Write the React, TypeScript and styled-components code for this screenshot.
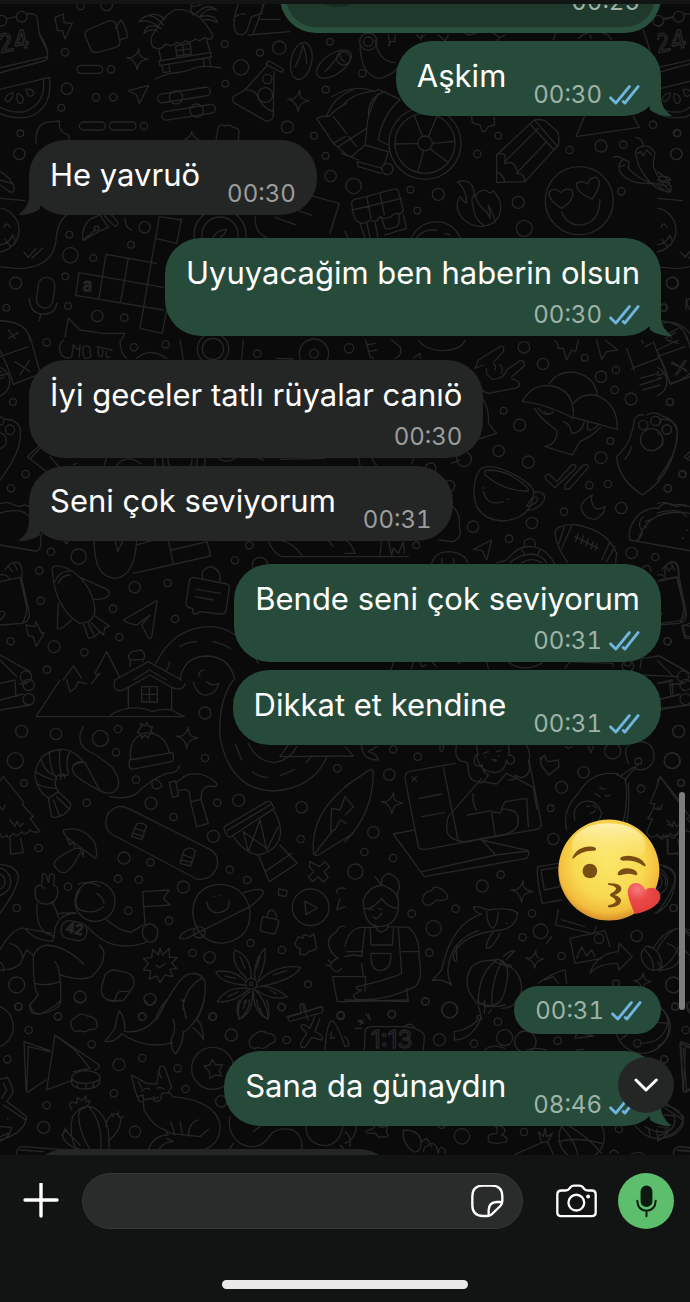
import React from "react";
import styled, { createGlobalStyle } from "styled-components";

const GlobalStyle = createGlobalStyle`
  * { box-sizing: border-box; }
  body { margin: 0; background: #0a0a0a; }
  button { font: inherit; }
`;

const Screen = styled.div`
  display: flex;
  flex-direction: column;
  height: 100vh;
  background: #0a0a0a;
  color: #fff;
  font-family: Inter, "Liberation Sans", sans-serif;
`;

const HeaderEdge = styled.header`
  flex: none;
  height: 4px;
  background: #131414;
`;

const Chat = styled.main`
  position: relative;
  flex: 1;
  min-height: 0;
  overflow: hidden;
  display: flex;
  flex-direction: column;
  justify-content: flex-end;
`;

const Wallpaper = styled.svg`
  position: absolute;
  left: 0;
  top: -4px;
  width: 690px;
  height: 1302px;
  fill: none;
  stroke: #252626;
  stroke-width: 4px;
  stroke-linecap: round;
  stroke-linejoin: round;
`;

const Thread = styled.ol`
  position: relative;
  flex: none;
  display: flex;
  flex-direction: column;
  list-style: none;
  margin: 0 0 -69px;
  padding: 0 29px;
`;

const Message = styled.li<{ $out?: boolean; $gap: number }>`
  display: flex;
  flex-direction: column;
  align-items: ${(p) => (p.$out ? "flex-end" : "flex-start")};
  margin-top: ${(p) => p.$gap}px;
`;

const Bubble = styled.div<{ $out?: boolean; $stacked?: boolean }>`
  position: relative;
  display: flex;
  flex-direction: ${(p) => (p.$stacked ? "column" : "row")};
  align-items: flex-end;
  column-gap: 27px;
  row-gap: 7px;
  min-height: 75px;
  padding: 15px 21px 6px;
  border-radius: 36px;
  background: ${(p) => (p.$out ? "#274b3a" : "#242626")};
`;

const BubbleText = styled.p<{ $stacked?: boolean }>`
  margin: 0 0 ${(p) => (p.$stacked ? 0 : 14)}px;
  font-size: 31px;
  line-height: 40px;
  white-space: nowrap;
`;

const Meta = styled.span<{ $out?: boolean }>`
  display: flex;
  align-items: center;
  gap: 7px;
  font-size: 24px;
  line-height: 30px;
  font-variant-numeric: tabular-nums;
  color: ${(p) => (p.$out ? "#9fb3a8" : "#9c9d9d")};
`;

const TimePill = styled.div`
  display: flex;
  padding: 10px 19px 8px 21px;
  border-radius: 24px;
  background: #274b3a;
  margin-top: 65px;
`;

const QuoteBubble = styled.div`
  position: relative;
  display: flex;
  flex-direction: column;
  width: 381px;
  height: 96px;
  padding: 6px;
  border-radius: 36px;
  background: #29503d;
`;

const QuoteBody = styled.div`
  position: relative;
  flex: 1;
  display: flex;
  justify-content: flex-end;
  align-items: flex-end;
  overflow: hidden;
  padding: 0 15px 10px;
  border-radius: 30px;
  background: #20392d;
`;

const QuoteDisc = styled.span`
  position: absolute;
  left: 16px;
  bottom: 20px;
  width: 72px;
  height: 72px;
  border-radius: 50%;
  background: #182a21;
`;

const PartialBubble = styled.div`
  width: 366px;
  height: 75px;
  border-radius: 36px;
  background: #242626;
`;

const TailShape = styled.svg<{ $out?: boolean }>`
  position: absolute;
  bottom: 0;
  ${(p) => (p.$out ? "right: -12px;" : "left: -12px; transform: scaleX(-1);")}
  width: 26px;
  height: 36px;
  fill: ${(p) => (p.$out ? "#274b3a" : "#242626")};
`;

const TickIcon = styled.svg`
  width: 31px;
  height: 20px;
  fill: none;
  stroke: #6fb5dd;
  stroke-width: 9px;
  stroke-linecap: round;
  stroke-linejoin: round;
`;

const Emoji = styled.svg`
  display: block;
  width: 103px;
  height: 102px;
`;

const ScrollThumb = styled.div`
  position: absolute;
  right: 5px;
  bottom: 145px;
  width: 6px;
  height: 218px;
  border-radius: 3px;
  background: #7d7d7d;
`;

const RoundButton = styled.button`
  display: grid;
  place-items: center;
  width: 56px;
  height: 56px;
  padding: 0;
  border: 0;
  border-radius: 50%;
  background: #5dbe6d;
`;

const JumpButton = styled(RoundButton)`
  position: absolute;
  right: 16px;
  bottom: 42px;
  background: #242626;
`;

const Composer = styled.form`
  position: relative;
  flex: none;
  display: flex;
  flex-direction: column;
  align-items: center;
  padding: 18px 16px 13px;
  background: #121313;
`;

const ComposerRow = styled.div`
  align-self: stretch;
  display: flex;
  align-items: center;
  gap: 16px;
`;

const IconButton = styled.button<{ $width: number }>`
  display: grid;
  place-items: center;
  flex: none;
  width: ${(p) => p.$width}px;
  height: 56px;
  padding: 0;
  border: 0;
  background: none;
`;

const Field = styled.div`
  flex: 1;
  min-width: 0;
  display: flex;
  align-items: center;
  height: 56px;
  margin-right: 11px;
  padding: 0 10px 0 24px;
  border: 1px solid #353636;
  border-radius: 28px;
  background: #2a2b2b;
`;

const FieldInput = styled.input`
  flex: 1;
  min-width: 0;
  border: 0;
  outline: 0;
  background: none;
  color: #fff;
  font: inherit;
  font-size: 31px;
`;

const LineIcon = styled.svg<{ $w: number; $h: number }>`
  width: ${(p) => p.$w}px;
  height: ${(p) => p.$h}px;
  fill: none;
  stroke: #fff;
  stroke-linecap: round;
  stroke-linejoin: round;
`;

const HomeIndicator = styled.div`
  width: 246px;
  height: 9px;
  margin-top: 51px;
  border-radius: 5px;
  background: #e9e9e9;
`;

/* ---------- wallpaper ---------- */

type Tile = {
  x: number;
  y: number;
  dots: string;
  sparks?: string;
  d: string[];
  more?: React.ReactNode;
};

const leftTiles: Tile[] = [
  {
    x: 0,
    y: 0,
    dots: "242,18,11 320,15,17 195,157,11 674,132,10 838,143,20 780,158,10 723,202,23 676,251,10 977,269,10 990,125,10 201,266,17 288,292,11 340,292,11 184,323,10 61,400,10 58,462,17 862,381,18 942,407,10 977,467,10 992,528,17 208,704,10 393,734,10 211,766,23 280,774,10 196,829,10 47,849,18 204,918,10 19,923,10 292,948,17 373,953,11 434,682,17 333,208,11 432,378,11 528,292,20 590,332,20 802,237,14 796,285,22 -9,690,66 660,705,78 660,705,54 290,685,7",
    sparks: "412,177,32 895,302,32",
    d: [
      "M-38 80L-10 160M18 56L50 50M80 42Q110 38 112 56L118 102Q145 140 143 170Q142 180 130 183L-50 232M143 170L-20 208M118 105Q128 125 140 150",
      "M165 52L190 42L192 68L217 70L195 117L188 92L172 92Z",
      "M262 90L328 62Q345 60 350 78L360 125Q360 138 348 142L292 157Q278 160 272 148L256 108Q253 96 262 90ZM346 85L362 60Q380 80 382 112L358 120",
      "M455 110Q500 30 535 28Q600 30 638 105Q638 125 612 113Q600 128 586 117Q570 132 556 122Q545 136 530 127Q515 143 497 132Q480 155 458 140Q450 125 455 110ZM477 150L483 183M620 120L630 155M477 183L632 157L634 171L480 197ZM487 198L490 218M507 195L510 215M610 177L613 198M628 174L632 195M490 218L510 215M465 237Q490 225 510 220Q550 218 590 202Q620 195 663 204M527 138L570 130L574 162L530 168ZM548 134L552 165M528 152L572 146",
      "M490 75Q450 25 417 65Q450 55 480 85M485 85Q440 65 432 100Q450 85 472 92M495 60Q480 40 450 44M580 45Q560 20 590 0M585 45Q620 5 650 30Q620 20 600 50M600 50Q645 40 652 68Q625 55 610 60M578 20Q600 20 618 0",
      "M800 198L735 270L702 288Q693 297 702 308L795 362Q815 365 820 350L822 215M808 183L850 207Q850 216 842 216L799 194Q798 186 808 183ZM735 268Q770 270 775 295Q790 325 820 335",
      "M885 200Q905 165 908 135Q920 160 920 190M975 215Q1010 180 1020 155Q1020 180 1035 185",
      "M700 60Q710 40 735 42M720 0Q690 70 710 100Q735 115 745 80L755 50L785 40L790 0M745 105L870 95M760 100L795 5M775 58L840 58",
      "M385 272L446 256L418 311L410 285Z",
      "M980 350Q1000 290 1060 270M950 355Q970 345 990 348Q1000 330 1040 310M950 355L1000 430L1040 465M1000 350L1040 400M1000 430L1035 410",
      "M108 430Q105 375 140 367L178 363L178 380Q185 400 205 405L208 420M555 418Q572 412 575 395Q580 412 595 418M648 420L655 380Q665 370 672 378Q690 372 700 382Q720 385 717 400L715 420",
      "M-90 290L148 232Q160 330 80 352Q0 360 -60 300M130 240Q138 310 75 335Q10 345 -42 288M15 298Q20 280 40 278Q38 300 22 306ZM52 280Q70 285 70 300Q65 315 55 308Q48 295 52 280ZM78 268Q100 265 102 280Q95 292 85 288Z",
      "M-111 720Q-110 610 -56 590L75 602M-60 795L60 806Q160 800 168 720Q172 665 200 645M72 757L85 772L108 745M95 775L128 745M-28 672Q-20 655 -8 672M12 682Q20 662 30 682M-50 690Q-40 735 0 735Q30 730 38 705M15 718L30 738Q45 740 45 720L38 705",
      "M0 515Q30 530 42 560Q45 580 30 576L0 555M0 540L35 550",
      "M248 720Q245 680 270 658L300 645L325 682Q290 695 250 722ZM250 720L285 690M312 645Q325 660 345 680Q360 670 350 662L335 645M375 655Q375 685 395 690",
      "M318 763L470 790M237 818L490 862M227 886L490 930M318 763L297 893M385 775L362 905M237 818L227 886M478 650L455 780L420 985L487 1000L500 930M545 655L530 730L470 716M478 650L545 660",
      "M88 895Q90 940 125 942Q165 945 170 910M122 945L117 963M640 712Q650 690 680 688Q675 705 660 712",
      "M765 650Q765 700 800 712M825 652L886 674M935 588L1018 610L990 700M885 628L935 646",
      "M-50 965Q80 950 90 1020M25 990L45 1015M25 1015L55 998M195 1010L205 955L240 990L310 1000L375 1000L365 1020",
    ],
    more: (
      <>
        <circle cx="65" cy="50" r="16" />
        <circle cx="4" cy="62" r="16" />
        <text x="0" y="160" fontSize="76" transform="rotate(-12 0 160)">24</text>
        <text x="248" y="872" fontSize="50">a</text>
        <rect x="231" y="196" width="77" height="24" rx="12" />
        <rect x="238" y="366" width="78" height="24" rx="12" />
        <rect x="328" y="366" width="80" height="24" rx="12" />
        <rect x="472" y="272" width="160" height="26" rx="13" transform="rotate(-9 552 285)" />
        <rect x="485" y="324" width="162" height="26" rx="13" transform="rotate(-9 566 337)" />
        <ellipse cx="904" cy="183" rx="31" ry="56" transform="rotate(12 904 183)" />
        <ellipse cx="1002" cy="192" rx="60" ry="30" transform="rotate(-35 1002 192)" />
        <rect x="112" y="832" width="50" height="92" rx="25" transform="rotate(8 137 878)" />
      </>
    ),
  },
  {
    x: 0,
    y: 340,
    dots: "140,7,11 402,22,11 497,13,11 639,27,47 639,27,32 772,41,11 942,41,44 942,41,13 -17,125,46 39,186,10 30,269,14 -5,302,24 0,243,12 77,402,11 33,445,11 153,635,11 236,650,23 118,692,11 404,742,17 503,729,11 122,782,11 339,806,11 525,837,11 358,891,11 32,904,11 162,920,18 253,937,11 141,989,11 705,661,11 748,616,11 780,675,23 78,1010,17 540,360,75 540,360,52 540,360,36",
    d: [
      "M90 -10L118 90Q118 105 105 108L40 133Q30 100 22 80L-5 20M0 50L85 20M45 65L90 95M88 62L60 105M-50 122L25 100M-38 110L5 95M-30 128L12 112",
      "M190 0Q170 20 185 45Q200 60 215 50L220 15Q240 40 240 15L238 50M250 20Q275 10 270 40Q280 55 255 55Q245 40 250 20M290 20L335 30M295 22L295 45Q310 60 308 30M320 35Q315 60 330 50M360 0Q360 40 380 55M410 55Q450 20 500 55M540 0L550 57M730 0L725 57M830 55L880 57",
      "M0 420Q70 330 60 265Q50 235 10 238",
      "M82 350L115 320M92 355L120 325M82 350L140 395M150 350L185 390M240 352L265 352M310 385L320 352M350 375Q380 340 425 372M650 352Q680 375 710 352M765 352L790 360M840 358L975 355M220 375L230 370",
      "M-40 520Q-10 485 25 488Q40 495 60 500Q75 490 88 500M-40 540Q0 510 55 512Q75 515 88 530M0 615L105 633Q125 635 122 600L125 580M190 600L200 612L208 600",
      "M283 600Q280 710 345 715Q405 710 410 600M345 600L353 635L370 600M410 615L465 600M400 700L632 648L620 600M505 600L520 672M515 630L622 605",
      "M15 690Q35 660 55 668Q70 680 65 715L88 820Q90 845 65 850L0 855M0 725L60 712L80 800Q82 820 70 845M0 705Q20 700 30 720M25 680L38 695M42 670L52 690M0 815Q10 810 15 820Q10 835 0 840",
      "M158 700Q150 670 185 680Q230 690 265 745Q290 790 283 825Q270 850 240 850Q200 830 175 775Q160 740 158 700ZM165 725Q180 690 210 695M175 730Q185 705 210 705M240 712L315 745Q335 755 325 768Q310 780 283 778M175 790L172 865Q180 870 190 862L215 840M250 850L265 895L285 890L300 875M265 850L285 890M270 845L310 885L315 862M285 828L328 858L315 865",
      "M370 840L470 782Q475 785 470 792L455 892Q452 900 445 893L425 855L450 825L410 855Q380 850 370 840Z",
      "M580 712L680 732Q690 735 688 745L678 812Q672 825 660 822L600 815Q580 830 578 815L578 805Q558 805 558 790L568 722Q572 712 580 712ZM590 748L662 760M585 770L640 780M608 715Q600 685 635 680Q665 690 660 728",
      "M78 855L105 860L108 845L125 880Q135 875 130 885L108 920L100 890L85 888Z",
      "M0 945L90 995M0 960L50 1010M320 935L285 1000Q290 1010 300 1000L275 1030M320 935L358 1010M220 978L190 1020M220 978L245 1015M395 935L425 930Q440 945 430 958L392 960Q378 950 395 935ZM390 962L390 980M428 960L428 965M345 1020L445 965L545 1020M400 1020L448 990L500 1020",
      "M468 970Q520 860 635 860Q720 865 775 970M540 920Q565 905 590 905M640 905Q665 910 690 925M500 990Q510 975 508 965M540 1020Q550 950 620 948Q690 950 705 1020M600 1010Q590 995 612 990",
      "M805 600Q815 635 845 650L1035 650M845 602Q880 610 905 645M985 602L1000 620",
    ],
  },
  {
    x: 0,
    y: 680,
    dots: "65,154,18 168,162,17 354,147,11 301,175,24 348,217,11 615,99,18 615,234,11 46,242,24 72,309,10 408,299,11 260,368,11 453,370,18 520,411,11 652,368,11 716,361,18 1012,265,11 905,382,17 902,477,11 640,469,18 116,504,11 372,534,18 451,547,11 689,569,11 742,600,11 354,596,11 417,599,11 204,620,11 550,621,18 50,684,11 385,692,11 507,722,11 752,789,11 578,819,11 629,832,17 846,810,11 50,915,24 240,951,18 56,980,11 450,958,18 924,913,10 845,982,11 174,1010,11 426,1010,11 637,1010,11 1022,1008,11 86,15,17 86,58,17 598,757,17 754,912,17 754,912,5 932,682,55 285,664,60 -10,605,42 -10,605,25",
    sparks: "561,173,32",
    d: [
      "M0 10L45 0M0 60L70 42M45 0L48 50M0 90L90 75M60 12L80 10",
      "M180 0L108 110L553 110L515 90M200 0L210 35Q225 30 235 5L260 12M345 0Q335 35 365 32L385 22L450 -15L515 22Q550 35 555 10M385 22L385 85M515 22L515 90M330 108Q350 90 385 85Q430 80 455 95Q490 85 515 90M425 20H472V66H425ZM448 20V66M425 43H472M580 5Q590 45 618 46Q650 40 657 10Q635 20 620 5",
      "M250 140Q225 185 260 210Q300 230 335 260Q365 300 352 325Q335 350 300 332Q255 310 225 285Q210 265 222 255L250 245M255 248L300 333M330 350Q380 360 410 340Q450 300 500 280Q535 280 538 257M458 300Q450 325 470 327Q495 320 478 305Q465 295 458 300",
      "M250 245Q215 200 170 210Q110 220 105 290Q110 330 145 355L155 410L165 413L190 405L210 385L212 370L175 335Q155 300 175 285L205 285M150 215Q145 240 160 280M180 208Q175 250 185 290M210 215Q195 240 205 280M125 240Q130 270 160 285M105 275Q130 290 158 300M110 310Q130 325 170 325M145 355L175 335M160 360L180 410M170 350L205 385M165 285L170 300M180 285L182 298M190 282L195 295M220 255Q235 240 255 248",
      "M388 240L515 218Q522 220 520 240L515 245L395 268Q385 265 388 240ZM392 238Q385 170 440 158Q495 160 508 218M415 150L425 140L422 130L435 138L440 128L447 140L458 140L452 152L460 160L448 163L445 175L435 165L425 175L422 160L412 158Z",
      "M550 290Q600 265 650 310Q655 320 640 320Q620 312 605 335L603 358L625 430L590 440L572 365L568 335Q560 325 535 332M508 307L527 303L535 348L518 352ZM527 310L552 290M573 365L605 358",
      "M355 380Q320 390 317 425Q318 455 340 465L590 597Q630 605 650 565Q660 525 630 508L385 385Q370 378 355 380ZM410 432Q425 425 440 437L425 478L395 470ZM405 445L435 455M400 460L432 470M553 510Q570 498 587 512L572 558L540 550ZM550 525L580 535M545 540L578 548",
      "M190 450Q250 435 285 490Q295 530 285 535Q240 500 210 480Q190 465 190 450ZM200 475L210 495L220 485L225 505L240 505L250 530L250 510M225 505Q160 535 162 555Q175 580 195 578Q215 570 240 520",
      "M-20 330L10 290L70 365L68 375L100 410L90 415L120 455Q100 460 90 450Q75 470 65 455Q50 475 40 460Q25 480 20 465Q5 480 0 460M30 420L45 440L50 425L60 440L70 430M30 475L32 522L70 518L62 475M0 380Q10 400 15 375",
      "M-40 555Q40 545 55 585Q58 620 0 700",
      "M673 440L800 365Q810 362 815 370L823 385L690 472L685 470Q670 455 673 440ZM682 452L815 372M700 470Q735 520 775 525Q840 510 842 455Q840 420 820 390M730 455L745 515L780 420L800 510L835 440M730 455L800 505M775 525L808 605L892 550L840 495M795 575L875 520",
      "M1050 310Q930 400 940 520Q945 530 955 525L1060 460M1035 350L1020 390L995 385L992 455L1005 450L1020 420L1040 430M945 520L1000 450",
      "M930 545L958 560L975 545L988 560L972 575L985 592L970 607L955 590L938 605L925 590L942 575L928 560Z",
      "M108 640Q100 620 120 615L135 625M125 612L128 582Q138 578 140 590L145 608L150 582Q165 580 163 595L160 615Q178 620 172 645Q165 675 135 672Q105 670 105 640M112 670Q105 740 140 760L162 770Q165 700 228 700M155 665Q170 690 175 712M175 700L225 698M162 770L158 784Q100 780 75 745Q40 740 0 810M75 745L155 760M180 700L190 698M262 740Q330 820 430 790L440 785M320 720Q370 760 395 755L430 735M235 612Q270 600 300 620M290 640Q308 650 312 670M240 630Q215 670 240 690Q280 705 310 680",
      "M100 830Q110 800 140 795Q200 800 252 853M100 830Q100 930 115 945L90 975Q85 1005 120 1002Q185 990 182 960Q185 870 165 845M105 910Q140 920 180 905M182 885Q240 905 275 890Q320 850 310 810L298 795M0 870Q60 870 68 835L80 810L98 825M30 790Q65 800 68 835M0 845Q15 860 10 875",
      "M438 735Q425 745 428 765Q435 785 455 787Q475 780 473 750Q460 725 438 735M435 733L428 635L508 630L490 655L510 675L433 680",
      "M578 700Q580 615 665 613Q735 620 750 690Q755 780 665 790Q590 785 578 700M620 665Q625 700 655 698Q690 695 688 662M730 638Q785 620 790 635Q790 650 750 680M750 680L560 775Q535 780 540 770Q550 750 585 745M642 650L644 648M658 648L660 646",
      "M837 627L862 632L858 650L835 645ZM788 710L830 718Q838 722 835 732L828 755Q825 763 815 761L788 755Q778 750 782 740ZM802 710Q802 690 818 690Q832 700 828 718M915 663L952 684L918 704Z",
      "M885 790L895 770L910 775Q905 765 918 765L930 770L942 762L950 805Q940 815 930 812L915 825L898 822L902 805Q890 808 885 790Z",
      "M480 805L488 825L508 805L508 832L532 832L515 850L530 865L510 868L518 890L495 885L480 908L470 888L448 898L452 872L430 870L445 850L430 835L455 832L458 808L475 825ZM468 855L478 863L495 852",
      "M345 870L380 878Q405 885 402 915L390 935L370 962Q330 965 315 955Q300 940 305 920L315 885Q325 870 345 870ZM345 962Q350 930 370 935Q395 935 400 920",
      "M740 895Q690 850 705 810Q755 830 754 895M765 895Q760 840 795 805Q800 850 775 900M775 905Q830 850 903 862Q880 900 780 920M738 905Q700 865 648 875Q660 910 735 915M738 925Q680 920 652 965Q700 970 745 930M750 935Q705 960 718 1018Q760 1000 758 935M765 930Q800 960 805 1018Q760 1000 760 935M770 922Q810 910 862 950Q820 965 768 930M720 830L735 865M780 830L770 865M820 885L860 872M675 888L705 895M685 950L715 935M730 985L740 960M780 985L785 1000M810 930L830 942",
      "M470 1020Q530 900 560 885Q600 870 615 905Q620 960 590 1020M605 895Q560 920 550 975L558 1015M545 960L547 962",
      "M700 0Q655 60 660 170Q690 330 820 333Q940 325 980 232M745 190Q770 245 825 248Q870 240 890 200M706 193L725 240M757 275Q775 290 802 292M842 287L885 268M918 248L935 230M840 230L865 195M840 230L1035 228",
      "M860 1010L970 980M905 970L925 1020",
      "M1035 740Q1015 735 1010 755Q985 770 985 790Q990 820 1015 835M998 890L1040 890M998 890L1012 965L1040 965M985 840L995 850M978 855L990 858M1010 835Q985 850 995 865Q1010 885 1025 865M1012 640Q1005 620 1035 625M1020 655L1010 690L1035 680",
    ],
    more: (
      <>
        <text x="195" y="755" fontSize="42" transform="rotate(12 195 755)">42</text>
        <rect x="183" y="725" width="78" height="54" rx="24" transform="rotate(12 222 752)" />
      </>
    ),
  },
  {
    x: 0,
    y: 1000,
    dots: "55,19,11 174,49,11 86,90,11 275,133,11 427,50,11 427,174,11 357,194,18 22,178,11 342,280,11 140,316,11 131,382,18 533,205,11 557,267,11 639,50,11 694,105,18 664,304,17 405,395,17 845,21,11 860,120,11 1022,45,11 638,205,63 -25,80,65",
    d: [
      "M90 10Q90 40 120 42Q170 20 182 0M225 0Q240 15 258 0M320 0Q340 8 360 0M435 0Q450 30 467 0",
      "M215 80Q205 60 228 52Q240 35 262 48Q292 50 292 78Q285 92 268 88Q255 100 240 92Q220 100 215 80ZM752 140Q740 120 762 105Q780 85 802 100Q830 100 825 125Q805 135 802 138Q790 150 775 142Q760 150 752 140Z",
      "M315 124Q335 100 345 85Q350 50 358 32Q375 55 375 85Q370 95 378 95Q430 100 465 60Q480 20 500 0M315 124Q340 130 365 102Q440 150 518 128M520 58Q530 90 515 115Q510 145 527 162Q550 130 550 95M612 0Q600 60 550 98M578 82Q600 100 610 118Q610 75 592 60M550 0L550 30",
      "M140 270L165 105L298 195Q300 205 285 210M165 105L225 150L270 205L220 215M140 270L220 240M72 125L78 270Q80 278 85 275L138 240M72 125L150 152M85 140L80 270M85 140L150 155",
      "M215 235Q215 215 257 212Q300 215 300 235L298 250Q290 265 257 267Q215 265 215 245ZM215 235Q225 250 257 250Q295 248 300 235M232 252V264M258 252V265M280 250V262",
      "M0 238L22 232Q40 260 38 280L20 305Q50 325 80 350Q75 400 0 420M10 250L20 270L5 295M10 315L75 358M0 380L35 382Q30 410 0 425M22 355L24 357M0 410Q10 405 25 400",
      "M395 228L405 270L418 305L430 305L432 330Q460 380 495 390L505 405Q460 405 445 450M395 225L440 250L470 252L480 200Q490 195 495 205L515 262L505 275L518 290Q640 300 660 370Q665 430 610 450M415 245L425 265M475 215L485 235M425 275Q435 260 450 268M472 265Q480 258 492 268M410 290L430 285L430 300L455 295L470 305Q485 305 485 280L510 278M460 290Q465 300 475 290M495 390L510 400L600 410M512 365L525 405M540 365L548 408M565 408Q565 370 595 360M600 410L625 388M475 450Q490 425 520 425L500 415",
      "M612 198L630 195L636 178L648 195L668 193L658 212L665 228L645 225L630 235L628 215Z",
      "M228 447Q205 400 218 350Q240 315 270 320Q310 330 325 390L328 450M240 330Q225 370 270 450M268 322Q310 370 302 450M215 330Q205 310 215 305L230 310L232 292L245 302L258 288L258 305L270 302Q265 325 240 328M240 435L195 390Q185 400 190 415Q205 440 240 448M328 420Q365 390 362 355Q350 335 335 345Q318 360 318 380M185 405L195 395M195 385L205 400M335 340L340 350M355 335L355 350M370 350L360 355M50 465L50 455Q55 440 70 440L200 450M60 450L130 455",
      "M690 445L700 430M690 350Q680 400 720 430Q780 460 815 400Q840 380 880 390Q910 410 905 445M760 395L780 380M918 380Q920 435 980 437Q1020 430 1028 380M1020 435L1035 450",
      "M718 0Q705 30 718 58Q750 30 748 0M770 0Q775 40 805 58Q810 20 800 0M730 10L738 0",
      "M975 150Q980 70 995 62Q1010 65 1035 140M995 95L992 115L1005 113M868 50Q860 60 870 64L965 38Q975 25 960 20L920 35L912 12Q900 8 900 20L905 40ZM915 75Q900 70 905 85L920 100L902 130Q900 145 915 142L935 112L965 120Q972 105 955 100L945 95L960 55M915 75L930 85L945 48",
    ],
  },
];

const rightTiles: Tile[] = [
  {
    x: 345,
    y: 0,
    dots: "-5,175,20 52,220,11 240,430,108 240,430,90 240,430,22 460,407,10 397,462,11 674,450,11 768,438,18 835,434,11 924,374,11 996,399,11 994,462,17 26,558,23 196,569,10 280,583,18 217,632,10 520,607,18 538,685,24 829,574,11 981,849,17 957,923,11 703,602,102 70,125,26 70,125,14 127,507,17",
    d: [
      "M218 431L150 432M262 430L330 424M232 409L208 346M250 410L276 348M236 452L218 516M256 447L310 488",
      "M45 140Q50 230 105 235Q145 225 160 200M90 120Q100 185 150 188M130 105L135 135M150 105L150 125Q135 120 130 138M215 105L225 115L240 105M230 105L228 120M280 105L300 122M310 105L300 125M360 100L370 105L392 100M445 100L465 112L480 105M465 112L455 125M625 120L632 100M700 115Q740 80 790 105L800 120M735 105L738 115",
      "M-40 290Q30 250 90 275L100 268L165 298M-10 320Q20 280 80 275M165 298Q110 350 100 420L130 435M65 390Q65 340 100 280M-20 440L65 385M65 395L60 435L130 455L118 495M60 435L20 470M-10 460L40 480M10 410L35 440M38 485L112 505M40 500L108 520M38 485Q35 495 42 502M70 345Q70 290 120 275",
      "M380 350L382 368L405 375L412 395L420 393L430 380L448 375L448 352",
      "M565 362Q580 355 600 362L638 395Q645 415 640 435L540 545L455 547L455 465ZM558 375L625 448M570 362L638 440M455 465Q490 450 478 492Q500 480 512 500Q520 520 515 520Q540 520 540 545M480 485L580 385M515 520L605 425M455 515Q475 525 480 547",
      "M718 350L693 410L883 382L865 350",
      "M338 545Q375 535 385 565L390 590Q405 565 425 572Q435 585 445 572Q470 600 467 625Q465 675 405 680Q350 672 337 625Q335 600 345 590Q355 605 365 610Q365 570 338 545ZM415 675Q385 655 385 620Q375 600 388 582Q400 620 425 635L435 655Q435 630 430 615Q450 650 450 668",
      "M650 625Q608 600 613 575Q630 560 648 578Q665 560 682 572Q690 600 650 625ZM742 597Q690 575 695 550Q712 538 728 552Q735 530 755 532Q775 550 742 597ZM650 635Q665 675 705 675Q765 670 765 598",
      "M875 470Q865 445 890 440Q915 430 930 460Q925 485 925 500Q945 550 978 575Q930 575 895 520Q875 490 875 470ZM895 440Q895 415 872 412M878 460L888 455L895 468L905 450L920 465M825 515Q815 490 835 478L852 485L850 505Q880 540 935 553M825 515Q850 555 925 550M835 478Q820 465 805 472M825 500L840 495M940 530Q970 525 977 540L945 545M938 550Q960 560 970 555",
      "M25 600L145 568Q160 565 162 580L175 630Q170 645 155 640Q145 640 138 650Q118 660 105 650Q95 670 75 660Q60 675 45 668Q25 665 20 612Q20 605 25 600ZM65 590L78 655M105 580L118 645M22 630L170 595M110 655L120 685Q130 690 155 680Q165 675 162 640M175 645L185 685L120 705M45 670L60 715M65 668L75 712M90 665L98 710M0 695L10 715",
      "M200 712Q225 665 280 665Q325 670 345 712M215 712Q240 685 275 690M300 700L315 705",
      "M1035 895Q1015 910 1025 930M945 975Q990 950 1035 1000M970 1000L1000 985M1005 755L1020 770L1035 755",
      "M895 90L915 150",
    ],
    more: (
      <>
        <circle cx="940" cy="62" r="16" />
        <path d="M957 58L985 52" />
      </>
    ),
  },
  {
    x: 345,
    y: 340,
    dots: "537,22,17 594,72,17 719,53,10 768,110,17 813,90,11 809,150,11 858,177,18 975,186,11 476,212,10 524,255,18 796,303,10 461,333,17 550,366,18 768,353,18 1012,403,10 968,445,11 733,436,11 789,432,11 829,504,17 357,357,22 257,385,16 312,438,17 384,560,17 561,549,17 657,515,11 492,596,11 214,616,10 860,639,17 931,651,11 967,903,11 849,978,17 848,968,10 895,255,14 931,243,14 965,268,14 920,299,33 12,25,14",
    d: [
      "M415 75L390 85L400 60L465 20Q480 15 475 35L448 65M425 85Q420 105 445 118Q480 115 485 90M445 70Q455 75 450 90M465 75Q475 80 470 100M485 90L525 62Q540 60 538 78L500 110M500 115L520 125Q530 140 510 145L430 160Q410 155 395 130",
      "M628 0Q640 10 640 25L655 25L665 60L680 30L692 35L700 0M755 0L770 58L785 35L818 30L780 0M220 0Q240 30 290 32Q350 30 360 0M62 0L75 50L85 55M65 15L90 10M70 35L95 30M140 0L165 20Q175 45 150 55M205 55L225 40L225 55",
      "M845 25L868 90M860 85L940 55M925 5L975 130Q1010 125 1035 100M935 30L1000 0M980 70L1025 90M1018 62L990 105M900 20L920 10M895 10L890 0M885 115L940 100M885 135L950 115M895 150L945 135M965 0L1000 10",
      "M532 185Q560 130 620 138Q690 150 685 235Q600 190 532 185ZM612 132Q640 90 690 97Q750 110 757 165M685 190Q710 160 750 165Q820 190 817 268L685 232M568 205Q590 240 635 270Q640 310 600 320Q650 335 682 345L705 305Q740 290 767 262M600 215Q610 230 625 215M655 245Q675 250 680 280Q710 280 718 245M728 248Q725 275 735 270Q755 265 760 252M580 205Q600 230 615 220",
      "M815 350Q860 310 868 240Q875 222 895 225M905 225Q930 210 955 230Q985 235 997 275Q990 400 893 465Q820 420 815 350M840 358Q860 330 858 320",
      "M410 385Q440 370 500 400Q560 430 567 455Q560 540 470 543Q385 535 387 450Q390 400 410 385ZM420 392Q470 385 520 420Q560 450 548 453Q480 455 420 405ZM567 455Q605 455 598 480Q580 510 545 512M560 475Q585 465 575 485Q560 500 545 498ZM415 455Q425 500 475 485M413 443L416 445M488 477L492 479",
      "M605 405Q595 410 605 420L630 443L692 385Q695 370 680 375L635 425L615 405Q610 400 605 405ZM660 435L715 375Q730 370 730 382L675 445Q655 455 660 435",
      "M742 465Q710 480 708 505Q720 540 750 538Q780 525 780 500Q755 515 745 498Q735 480 742 465Z",
      "M632 570Q650 550 700 555Q790 575 815 640L812 668M632 570Q625 590 650 640L668 668M658 560L642 610M680 558L650 625M795 605L770 660M810 620L785 665M690 590L760 625M700 580L692 605M715 588L708 612M730 596L722 620M745 605L738 627M757 612L750 632",
      "M855 600Q845 560 885 520Q920 500 940 505Q960 480 985 495Q1010 490 1035 500M855 600L1035 632M880 600Q910 500 1035 520M875 600Q895 590 890 570Q875 550 895 530M900 545L915 540M900 560L905 562M1025 570L1028 572M1012 595L1016 594",
      "M385 628L440 600L425 660L412 632ZM325 500Q350 530 342 560Q355 590 325 605L280 600M260 670Q270 635 315 635Q360 640 368 668M290 655L292 670M325 655L327 670M0 600Q20 610 30 640Q0 640 0 640M0 650L190 650M110 600L105 648M130 602L140 645L145 625L160 640L175 605L178 640",
      "M455 668Q480 665 490 655Q520 615 560 620Q605 625 628 670M540 620Q530 600 555 595Q575 600 570 620M495 668Q520 645 560 642Q590 645 605 668M530 630L540 645M585 630L578 645M530 668Q560 650 590 668",
      "M945 720L995 710L1022 820Q1020 840 990 845L945 850M960 705Q955 675 980 665Q1000 665 1000 700L1020 800M970 690L985 680M1035 850L1010 860L1020 895L1035 895M890 690Q895 670 915 680L918 695",
      "M410 170Q435 210 430 250L455 280L400 297M40 350L45 375M80 350Q85 370 95 375M200 370L208 352M320 370L345 360",
      "M130 1000Q145 980 145 965M200 985L205 965M225 965L230 980L245 975M260 965L275 980M340 970L350 965M425 965L430 985M490 965Q530 1000 590 970M660 985L675 965L805 970L805 980M885 985L890 955L945 948L1035 1000M890 1005L1000 1010",
    ],
  },
  {
    x: 345,
    y: 680,
    dots: "145,208,11 218,230,11 133,284,17 1001,154,18 803,213,24 981,242,23 716,277,17 650,322,18 617,385,10 888,326,11 1008,308,10 85,457,17 58,516,11 144,534,11 31,575,23 467,584,11 412,618,18 200,701,11 332,686,11 266,745,23 253,818,11 533,772,11 561,700,11 587,754,22 650,828,11 762,776,14 875,768,17 625,477,17 986,684,11 985,915,23 241,964,11 314,990,23 140,1002,11 880,244,10 813,910,10",
    sparks: "141,369,32 530,634,32 569,838,26 892,905,26",
    d: [
      "M938 10L975 5L978 50L938 60M978 15L1000 10M980 50L1000 45M945 85L1035 75",
      "M0 200L25 228L-5 230M50 195Q50 240 100 240Q95 220 70 215L95 200M285 195L285 210Q292 220 295 205L295 195M660 200L670 205L680 200M730 200L738 218L745 200",
      "M0 485Q85 400 85 275Q80 265 70 272L0 320M0 350L25 380L0 405",
      "M190 275L330 250M190 275Q180 280 180 295L220 500Q225 510 240 508L580 447Q592 440 588 425L552 240M295 262L340 485M222 355L290 342M230 410L298 398M145 462L208 450M145 462L238 590L545 535Q555 525 550 512L410 480L452 525L550 513M238 590L225 572M200 290L215 302M214 290L202 303M452 525L230 575",
      "M335 195Q325 230 350 245Q370 240 370 265Q370 305 400 305Q410 320 430 285Q410 275 412 255Q385 265 388 240Q390 220 400 225Q390 195 400 192M490 195Q495 215 490 225Q510 225 508 245Q490 262 485 240Q480 275 450 278Q400 275 395 225M545 195Q560 225 550 245Q560 270 545 285Q530 300 510 285Q520 300 490 300M415 220L430 215M455 215L468 212M420 230L422 232M460 228L462 230M440 240L450 238Q448 250 455 240",
      "M410 305L455 312L485 280M410 295L310 410Q300 440 310 465Q330 485 360 485L470 465Q520 455 520 425Q520 390 490 390Q470 380 465 400Q455 395 440 398L450 465M367 405L440 392M485 280L565 322L575 385M480 365L545 355L550 440M480 365L470 385M385 340Q380 370 395 390",
      "M585 235L600 225Q600 240 610 245L640 240L642 260L612 285L590 258ZM600 225Q590 230 588 240",
      "M850 250Q830 200 860 190Q895 175 920 200Q940 245 905 265Q880 275 865 262L825 290M880 250L840 300M815 283L845 300M820 282Q740 270 700 340Q650 390 665 450M840 300Q850 330 840 400L835 425M850 310Q855 370 845 430M690 420Q680 380 715 365Q755 355 770 400L760 430M725 380L735 378M745 375L755 385M735 400Q745 400 750 392M765 320Q765 330 780 325M780 345Q785 352 795 345M750 340L765 350",
      "M945 290Q935 330 915 370L930 372Q920 400 908 415L922 418L905 455Q915 480 935 465L950 478L965 465L985 475L1000 460M945 290L1000 365M930 385Q940 395 950 380M968 435Q980 430 985 440M970 480L968 520L1000 522",
      "M640 550L578 560Q573 590 592 670L650 660M588 570L640 562L645 620L598 630ZM640 690L632 735L745 762L755 740M650 720L720 740",
      "M955 560Q995 570 990 610Q980 680 930 700M935 575Q970 585 960 615",
      "M232 660Q235 635 260 632Q265 615 285 625Q310 640 308 655Q295 665 275 660Q255 680 240 675Z",
      "M385 680Q400 678 430 690Q500 680 518 700Q515 740 470 750Q350 760 325 825M385 680Q390 700 410 702Q320 730 290 870L262 902Q290 895 320 915Q305 885 310 860Q320 780 400 752M425 695Q425 735 445 745Q460 725 460 695M445 755Q420 790 425 805Q440 810 465 760M485 730L487 731M325 825Q325 850 335 840L335 800",
      "M450 840Q400 840 380 860Q350 910 385 955Q400 985 420 965M455 840Q400 880 400 965M470 840Q500 860 480 930Q470 985 420 975M470 845Q440 900 440 970M450 840Q460 830 480 855Q500 850 500 862M480 855Q530 870 530 930Q520 985 470 985M500 862Q480 860 450 845M475 830Q490 812 510 812M485 838Q500 820 510 812M400 980Q410 1000 405 1020M440 990L430 1000",
      "M675 775L780 752L795 800M675 775L690 850L770 835M695 835L710 800L725 828L740 810L750 830M735 880Q755 820 820 815L822 790L862 830L822 870L818 850Q760 850 735 880Z",
      "M888 825Q900 785 925 805Q960 745 1010 745L1035 760M888 825Q890 860 925 872Q980 860 1000 800M900 810Q930 840 925 872M910 800Q950 810 950 860",
      "M620 770L605 790M580 910Q620 880 660 870L665 910M600 900L625 890L640 910M935 980Q960 985 970 1020",
      "M90 590L110 615Q105 590 130 580Q165 590 163 625L155 650M110 615Q70 620 55 660Q55 740 105 740Q165 735 160 660Q155 630 110 615M60 685Q80 690 110 655Q130 685 160 685M72 690Q78 685 85 690M100 685L112 688M85 710Q95 725 110 700M92 735Q95 758 112 755Q130 750 128 738M92 742L50 742Q10 745 0 800M128 740L190 742Q225 770 222 830Q235 900 210 920Q130 960 50 960Q25 960 25 945L50 930Q30 930 35 920L60 915Q155 890 170 880L160 745M75 742L78 795H142L145 745M78 820H138Q140 870 105 872Q75 870 78 820M60 742L50 830M50 830Q30 820 0 830M0 890L62 890L60 935M50 850L55 890M0 960L190 965L185 925M5 815L50 815M170 815L222 815",
    ],
  },
  {
    x: 345,
    y: 1000,
    dots: "241,5,11 141,43,11 314,30,24 283,119,18 387,131,11 459,65,11 479,113,24 541,125,32 638,122,11 957,178,11 990,20,10 290,375,10 537,396,11 351,409,23 822,387,11 710,411,68 892,80,80 877,130,11 403,53,7",
    d: [
      "M0 5L190 0M55 60L45 75M70 42L75 55M45 60L55 70M38 62L52 70M30 85L52 85M62 40L75 60",
      "M80 80L175 80Q235 85 238 110L235 150M80 80Q55 80 60 110L58 150M180 78Q200 65 210 85",
      "M397 0Q420 30 480 15M420 0L418 40M408 55Q380 120 328 120L328 95Q370 90 398 60M510 5L520 0M545 150Q570 140 605 150M695 150L715 148M420 150Q440 130 480 145M0 110Q15 125 10 138L0 138M655 85L745 108L690 115L695 100",
      "M1005 130L1015 275Q1030 280 1035 265M1005 130L1035 140M1015 145L1025 270",
      "M825 120Q890 70 940 20M870 90Q910 60 970 70M885 130Q960 130 970 60M840 110Q870 80 860 30",
      "M955 315Q1015 325 1015 370Q1000 410 950 415Q900 420 870 375M985 345Q1000 370 970 395Q930 400 900 380M910 385L915 405M935 390L938 412M960 385L970 405M940 350Q970 340 990 350",
      "M60 395L85 385L92 375L110 382L128 378Q120 400 130 405Q125 415 112 410L100 412L92 400L65 400",
      "M175 390Q170 430 205 455Q230 460 228 420Q220 390 175 390ZM228 425L245 415L260 440M245 440Q260 420 275 440L280 460M280 460Q285 430 300 450L300 460M235 455L240 440",
      "M430 420Q425 400 455 400Q460 380 450 378Q480 375 480 395L470 405Q490 410 485 425Q450 435 430 425M510 463L590 428L580 395L595 410L600 385L605 410L622 400L608 425L625 463M590 428L608 425",
      "M650 380Q690 420 700 470M640 425Q700 410 770 430M660 370Q730 410 770 460M35 378Q30 420 0 430M0 395Q20 410 15 440M795 460Q805 440 820 460M860 462Q880 452 895 462M985 460Q985 440 1010 440L1035 445M1000 452L1035 455",
    ],
    more: <text x="78" y="143" fontSize="72">1:13</text>,
  },
];

const sparkPath = (x: number, y: number, r: number) => {
  const k = Math.round(r * 0.32);
  return `M${x} ${y - r}Q${x + 3} ${y - k} ${x + k} ${y - k}Q${x + k} ${y - 6} ${x + r} ${y - 4}Q${x + k} ${y + 4} ${x + k} ${y + k}Q${x + 6} ${y + k} ${x + 4} ${y + r}Q${x - 4} ${y + k} ${x - k} ${y + k}Q${x - k} ${y + 4} ${x - r} ${y}Q${x - k} ${y - 2} ${x - k} ${y - k}Q${x - 4} ${y - k} ${x} ${y - r}Z`;
};

const Doodles = ({ tiles }: { tiles: Tile[] }) => (
  <>
    {tiles.map((t) => (
      <g key={`${t.x}-${t.y}`} transform={`translate(${t.x} ${t.y}) scale(0.3333)`}>
        {t.dots.split(" ").map((c, i) => {
          const [cx, cy, r] = c.split(",");
          return <circle key={i} cx={cx} cy={cy} r={r} />;
        })}
        {(t.sparks ? t.sparks.split(" ") : []).map((s) => {
          const [x, y, r] = s.split(",").map(Number);
          return <path key={s} d={sparkPath(x, y, r)} transform={`rotate(8 ${x} ${y})`} />;
        })}
        {t.d.map((d, i) => (
          <path key={i} d={d} />
        ))}
        {t.more}
      </g>
    ))}
  </>
);

/* ---------- small parts ---------- */

const Ticks = () => (
  <TickIcon viewBox="790 249 96 62" role="img" aria-label="Okundu">
    <path d="M795 289L811 305L853 254M834 300L839 305L880 254" />
  </TickIcon>
);

const Tail = ({ out }: { out?: boolean }) => (
  <TailShape $out={out} viewBox="0 0 26 36" aria-hidden="true">
    <path d="M0 0H14V16C14 25 18 31 24 35C25 36 24 36 23 36C16 36 9 34 3 30Z" />
  </TailShape>
);

type TextMessageProps = {
  text: string;
  time: string;
  gap: number;
  out?: boolean;
  stacked?: boolean;
  tail?: boolean;
};

const TextMessage = ({ text, time, gap, out, stacked, tail }: TextMessageProps) => (
  <Message $out={out} $gap={gap}>
    <Bubble $out={out} $stacked={stacked}>
      {tail && <Tail out={out} />}
      <BubbleText $stacked={stacked}>{text}</BubbleText>
      <Meta $out={out}>
        <time>{time}</time>
        {out && <Ticks />}
      </Meta>
    </Bubble>
  </Message>
);

const KissEmoji = () => (
  <Emoji viewBox="54 58 310 306" role="img" aria-label="😘">
    <defs>
      <radialGradient id="face" cx="0.5" cy="0.42" r="0.58">
        <stop offset="0" stopColor="#fbe668" />
        <stop offset="0.6" stopColor="#f8da50" />
        <stop offset="0.86" stopColor="#f3bd3c" />
        <stop offset="1" stopColor="#d9902c" />
      </radialGradient>
      <linearGradient id="shine" x1="0" y1="0" x2="0" y2="1">
        <stop offset="0" stopColor="#fff6c4" stopOpacity="0.85" />
        <stop offset="1" stopColor="#fbe668" stopOpacity="0" />
      </linearGradient>
      <radialGradient id="heart" cx="0.3" cy="0.2" r="0.9">
        <stop offset="0" stopColor="#f77b80" />
        <stop offset="0.4" stopColor="#ea4a48" />
        <stop offset="1" stopColor="#dc3934" />
      </radialGradient>
    </defs>
    <circle cx="207" cy="211" r="152" fill="url(#face)" />
    <ellipse cx="207" cy="138" rx="112" ry="68" fill="url(#shine)" />
    <g fill="#7a4d12">
      <path d="M97 176Q108 142 150 140Q172 140 168 151Q165 154 158 153Q125 152 101 176Q98 178 97 176Z" />
      <path d="M241 176Q244 168 268 168Q306 171 318 196Q318 201 312 199Q285 180 250 183Q240 182 241 176Z" />
      <path d="M233 223Q238 206 263 206Q288 207 293 222Q292 228 286 226Q263 218 241 227Q234 228 233 223Z" />
      <path d="M205 251Q243 250 245 267Q244 280 224 286Q244 292 244 304Q240 322 208 324Q201 321 206 317Q226 313 228 305Q226 296 212 290Q208 286 213 282Q228 274 229 267Q226 258 207 256Q202 254 205 251Z" />
    </g>
    <circle cx="150" cy="214" r="22" fill="#7a4d12" />
    <path
      d="M290 343Q286 345 283 338Q262 292 264 273Q268 250 289 250Q309 251 316 271Q329 261 344 266Q364 275 362 295Q356 325 290 343Z"
      fill="url(#heart)"
    />
  </Emoji>
);

export default function App() {
  return (
    <Screen>
      <GlobalStyle />
      <HeaderEdge />
      <Chat>
        <Wallpaper viewBox="0 0 690 1302" aria-hidden="true">
          <g id="doodle-left">
            <Doodles tiles={leftTiles} />
          </g>
          <svg x="657" y="0" width="33" height="1302" viewBox="0 0 33 1302">
            <use href="#doodle-left" />
          </svg>
          <Doodles tiles={rightTiles} />
        </Wallpaper>

        <Thread>
          <Message $out $gap={0}>
            <QuoteBubble>
              <QuoteBody>
                <QuoteDisc />
                <Meta $out>
                  <time>00:25</time>
                </Meta>
              </QuoteBody>
            </QuoteBubble>
          </Message>
          <TextMessage out tail gap={8} text="Aşkim" time="00:30" />
          <TextMessage tail gap={24} text="He yavruö" time="00:30" />
          <TextMessage out tail stacked gap={23} text="Uyuyacağim ben haberin olsun" time="00:30" />
          <TextMessage stacked gap={24} text="İyi geceler tatlı rüyalar canıö" time="00:30" />
          <TextMessage tail gap={8} text="Seni çok seviyorum" time="00:31" />
          <TextMessage out stacked gap={23} text="Bende seni çok seviyorum" time="00:31" />
          <TextMessage out gap={8} text="Dikkat et kendine" time="00:31" />
          <Message $out $gap={74}>
            <KissEmoji />
            <TimePill>
              <Meta $out>
                <time>00:31</time>
                <Ticks />
              </Meta>
            </TimePill>
          </Message>
          <TextMessage out tail gap={17} text="Sana da günaydın" time="08:46" />
          <Message $gap={23}>
            <PartialBubble />
          </Message>
        </Thread>

        <ScrollThumb />
        <JumpButton type="button" aria-label="En alta in">
          <LineIcon $w={24} $h={14} viewBox="866 234 72 42" strokeWidth="9">
            <path d="M872 240L902 270L933 240" />
          </LineIcon>
        </JumpButton>
      </Chat>

      <Composer onSubmit={(e) => e.preventDefault()}>
        <ComposerRow>
          <IconButton type="button" $width={50} aria-label="Ekle">
            <LineIcon $w={36} $h={36} viewBox="0 0 36 36" strokeWidth="3.4">
              <path d="M18 1V33M2 17H34" />
            </LineIcon>
          </IconButton>
          <Field>
            <FieldInput type="text" aria-label="Mesaj" />
            <IconButton type="button" $width={50} aria-label="Çıkartma">
              <LineIcon $w={33} $h={33} viewBox="376 553 99 99" strokeWidth="7">
                <path d="M412 555H438Q470 555 470 587V601Q470 610 464 616L438 641Q432 646 424 646H412Q380 646 380 614V587Q380 555 412 555ZM470 604H453Q430 605 429 628V645" />
              </LineIcon>
            </IconButton>
          </Field>
          <IconButton type="button" $width={52} aria-label="Kamera">
            <LineIcon $w={41} $h={34} viewBox="631 548 125 102" strokeWidth="7">
              <path d="M648 567H660Q668 567 672 561L675 557Q679 552 686 552H702Q709 552 713 557L716 561Q720 567 728 567H740Q752 567 752 579V634Q752 645 740 645H647Q635 645 635 634V579Q635 567 648 567Z" />
              <circle cx="693" cy="604" r="24" />
              <circle cx="729" cy="585" r="6" fill="#fff" stroke="none" />
            </LineIcon>
          </IconButton>
          <RoundButton type="button" aria-label="Sesli mesaj">
            <LineIcon $w={23} $h={33} viewBox="868 550 70 98" strokeWidth="6">
              <g stroke="#0d1a10">
                <rect x="888" y="553" width="30" height="60" rx="15" fill="#0d1a10" />
                <path d="M875 597Q877 626 903 627Q929 626 931 597M903 627V644" />
              </g>
            </LineIcon>
          </RoundButton>
        </ComposerRow>
        <HomeIndicator />
      </Composer>
    </Screen>
  );
}
